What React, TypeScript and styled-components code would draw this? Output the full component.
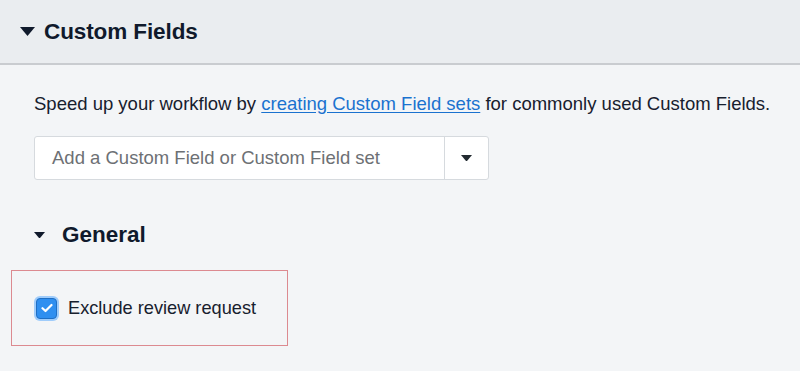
import React from "react";
import styled, { createGlobalStyle } from "styled-components";

const GlobalStyle = createGlobalStyle`
  html, body {
    margin: 0;
    padding: 0;
    background: #f3f5f7;
    font-family: "Liberation Sans", Arial, sans-serif;
    color: #17202e;
  }
`;

const Page = styled.div`
  width: 800px;
  height: 371px;
  overflow: hidden;
  background: #f3f5f7;
`;

const Header = styled.div`
  height: 65px;
  box-sizing: border-box;
  display: flex;
  align-items: center;
  gap: 9px;
  padding: 0 0 0 20px;
  background: #eaedf0;
  border-bottom: 2px solid #c9ccd0;
`;

const Title = styled.h2`
  margin: 0;
  font-size: 22.5px;
  font-weight: 700;
  color: #101a2c;
  letter-spacing: -0.1px;
`;

const Body = styled.div`
  padding: 28px 0 0 34px;
  display: flex;
  flex-direction: column;
`;

const Intro = styled.p`
  margin: 0;
  font-size: 18.5px;
  line-height: 22px;
  color: #17202e;
  white-space: nowrap;
`;

const Link = styled.a`
  color: #1a72cf;
  text-decoration: underline;
  text-underline-offset: 2px;
`;

const Select = styled.div`
  margin-top: 21px;
  width: 455px;
  height: 44px;
  box-sizing: border-box;
  display: flex;
  background: #ffffff;
  border: 1px solid #d6dade;
  border-radius: 3px;
`;

const Placeholder = styled.div`
  flex: 1;
  display: flex;
  align-items: center;
  padding-left: 17px;
  font-size: 18.5px;
  color: #6d7074;
`;

const SelectButton = styled.div`
  width: 43px;
  display: flex;
  align-items: center;
  justify-content: center;
  border-left: 1px solid #d6dade;
`;

const Section = styled.div`
  margin-top: 42px;
  height: 26px;
  display: flex;
  align-items: center;
  gap: 17px;
`;

const SectionTitle = styled.h3`
  margin: 0;
  font-size: 22.5px;
  font-weight: 700;
  color: #101a2c;
`;

const Highlight = styled.div`
  margin: 22px 0 0 -23px;
  width: 277px;
  height: 76px;
  box-sizing: border-box;
  border: 1px solid #dc8a90;
  display: flex;
  align-items: center;
  gap: 11px;
  padding: 0 0 0 24px;
`;

const Check = styled.span`
  width: 21px;
  height: 21px;
  box-sizing: border-box;
  border-radius: 4px;
  background: #2f8ff0;
  border: 1px solid #1f6fc4;
  box-shadow: 0 0 0 2px rgba(90, 170, 255, 0.55);
  display: flex;
  align-items: center;
  justify-content: center;
`;

const Label = styled.span`
  font-size: 18.2px;
  color: #17202e;
`;

const Caret = ({ size, color }: { size: number; color: string }) => (
  <svg width={size} height={size * 0.6} viewBox="0 0 10 6">
    <path d="M0 0 L10 0 L5 6 Z" fill={color} />
  </svg>
);

export default function App() {
  return (
    <Page>
      <GlobalStyle />
      <Header>
        <Caret size={15} color="#101a2c" />
        <Title>Custom Fields</Title>
      </Header>
      <Body>
        <Intro>
          Speed up your workflow by <Link href="#">creating Custom Field sets</Link> for
          commonly used Custom Fields.
        </Intro>
        <Select>
          <Placeholder>Add a Custom Field or Custom Field set</Placeholder>
          <SelectButton>
            <Caret size={11} color="#222a30" />
          </SelectButton>
        </Select>
        <Section>
          <Caret size={11} color="#101a2c" />
          <SectionTitle>General</SectionTitle>
        </Section>
        <Highlight>
          <Check>
            <svg width="12" height="10" viewBox="0 0 12 10">
              <path
                d="M1.5 5.2 L4.5 8 L10.5 2"
                fill="none"
                stroke="#fff"
                strokeWidth="2.2"
                strokeLinecap="round"
                strokeLinejoin="round"
              />
            </svg>
          </Check>
          <Label>Exclude review request</Label>
        </Highlight>
      </Body>
    </Page>
  );
}
